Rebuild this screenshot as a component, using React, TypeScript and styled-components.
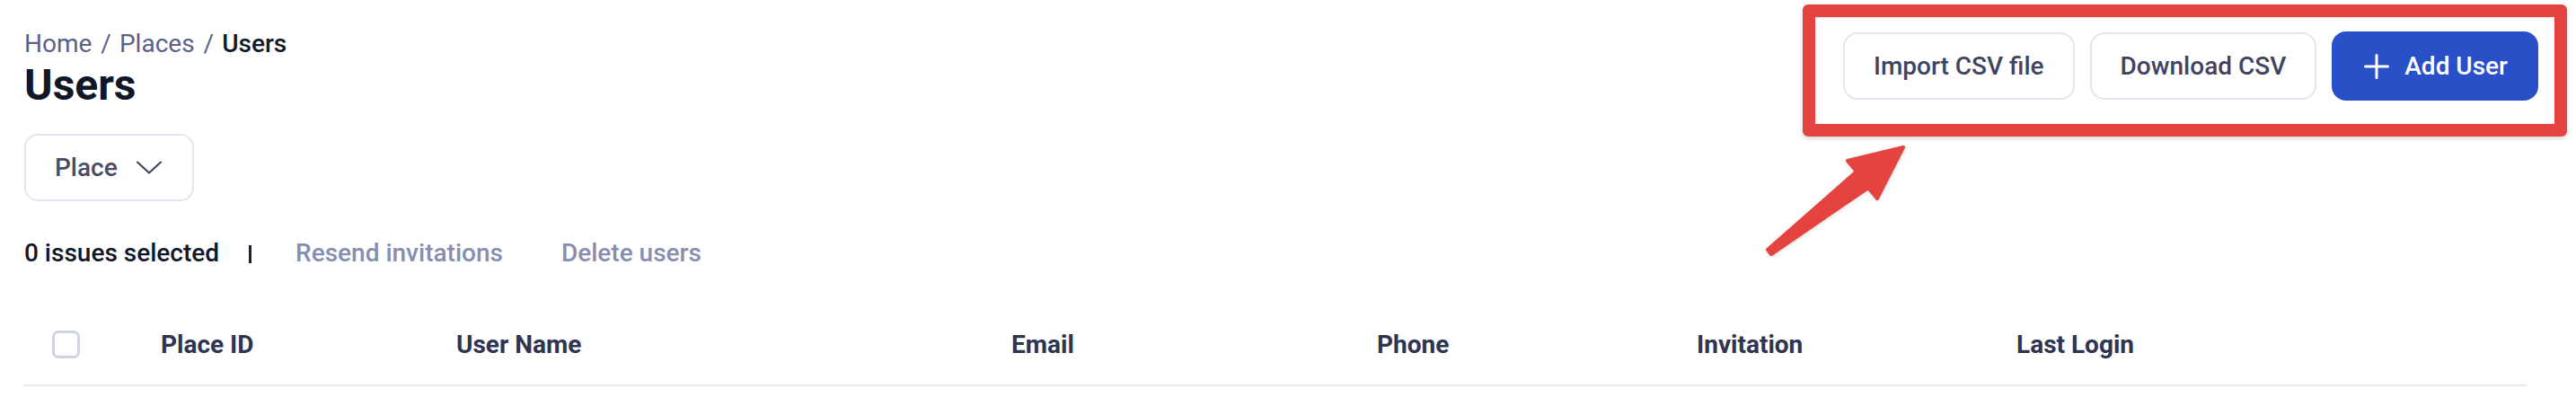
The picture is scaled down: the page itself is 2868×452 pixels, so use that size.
import React from "react";
import styled, { createGlobalStyle } from "styled-components";

const Global = createGlobalStyle`
  html, body { margin: 0; padding: 0; background: #ffffff; }
  body { font-family: Roboto, "Noto Sans", Arial, sans-serif; -webkit-font-smoothing: antialiased; }
  * { box-sizing: border-box; }
`;

const Page = styled.div`
  position: relative;
  width: 2868px;
  height: 452px;
  padding: 32px 55px 0 26px;
  overflow: hidden;
`;

const TopBar = styled.div`
  display: flex;
  justify-content: space-between;
  align-items: flex-start;
  margin-right: -13px;
`;

const TitleBlock = styled.div`
  display: flex;
  flex-direction: column;
  align-items: flex-start;
  padding-left: 1px;
`;

const Breadcrumb = styled.nav`
  font-size: 28px;
  line-height: 33px;
  display: flex;
  white-space: nowrap;
`;

const Crumb = styled.span<{ $current?: boolean }>`
  color: ${(p) => (p.$current ? "#111827" : "#58628a")};
  font-weight: ${(p) => (p.$current ? 500 : 400)};
`;

const Separator = styled.span`
  color: #58628a;
  margin: 0 9px 0 10px;
`;

const Title = styled.h1`
  margin: 2px 0 0;
  font-size: 48px;
  line-height: 56px;
  font-weight: 700;
  color: #111729;
`;

const FilterButton = styled.button`
  margin-top: 26px;
  height: 75px;
  width: 189px;
  display: flex;
  align-items: center;
  padding: 0 0 0 32px;
  gap: 21px;
  border: 2px solid #e3e6ee;
  border-radius: 15px;
  background: #fff;
  font-family: inherit;
  font-size: 28px;
  font-weight: 500;
  color: #474d66;
`;

const Actions = styled.div`
  position: relative;
  display: flex;
  align-items: center;
  gap: 17px;
  margin-top: 3px;
`;

const Button = styled.button<{ $primary?: boolean }>`
  height: ${(p) => (p.$primary ? "77px" : "75px")};
  padding: 0 ${(p) => (p.$primary ? "34px 0 36px" : "32px")};
  display: flex;
  align-items: center;
  gap: 17px;
  border: ${(p) => (p.$primary ? "none" : "2px solid #e3e6ee")};
  border-radius: 16px;
  background: ${(p) => (p.$primary ? "#2a50c8" : "#ffffff")};
  color: ${(p) => (p.$primary ? "#ffffff" : "#3f4560")};
  font-family: inherit;
  font-size: 28px;
  font-weight: 500;
  white-space: nowrap;
`;

const Highlight = styled.div`
  position: absolute;
  left: -45px;
  top: -30px;
  right: -32px;
  bottom: -40px;
  border: 14px solid #e4433f;
  border-radius: 6px;
  box-shadow: 0 2px 5px rgba(0, 0, 0, 0.18), inset 0 1px 3px rgba(0, 0, 0, 0.12);
  pointer-events: none;
`;

const Arrow = styled.svg`
  position: absolute;
  left: 1960px;
  top: 155px;
  overflow: visible;
  filter: drop-shadow(0 1px 2px rgba(0, 0, 0, 0.15));
`;

const SelectionBar = styled.div`
  display: flex;
  align-items: center;
  margin-top: 41px;
  padding-left: 1px;
  font-size: 28px;
  line-height: 33px;
`;

const SelectedCount = styled.span`
  font-weight: 500;
  color: #111729;
`;

const Divider = styled.span`
  width: 3px;
  height: 20px;
  background: #1b2034;
  margin: 2px 49px 0 33px;
`;

const BulkAction = styled.span<{ $gap?: number }>`
  color: #878eaf;
  font-weight: 500;
  margin-left: ${(p) => p.$gap ?? 0}px;
`;

const HeaderRow = styled.div`
  display: grid;
  grid-template-columns: 153px 329px 618px 407px 356px 356px 1fr;
  align-items: center;
  margin-top: 41px;
  padding: 28px 0 28px;
  border-bottom: 2px solid #e3e8ef;
`;

const CheckCell = styled.div`
  padding-left: 32px;
  display: flex;
  align-items: center;
`;

const Checkbox = styled.span`
  width: 31px;
  height: 31px;
  border: 3px solid #cfd4e3;
  border-radius: 7px;
  background: #fff;
`;

const HeaderCell = styled.div`
  font-size: 28px;
  line-height: 33px;
  font-weight: 700;
  color: #2f3450;
  white-space: nowrap;
`;

const Chevron = () => (
  <svg width="28" height="15" viewBox="0 0 28 15" fill="none">
    <path d="M1 1.5 L14 13.5 L27 1.5" stroke="#3a3f55" strokeWidth="2" strokeLinecap="round" strokeLinejoin="round" />
  </svg>
);

const Plus = () => (
  <svg width="28" height="28" viewBox="0 0 28 28" fill="none">
    <path d="M14 1.5 V26.5 M1.5 14 H26.5" stroke="#ffffff" strokeWidth="3" strokeLinecap="round" />
  </svg>
);

const columns = ["Place ID", "User Name", "Email", "Phone", "Invitation", "Last Login"];

export default function App() {
  return (
    <>
      <Global />
      <Page>
        <TopBar>
          <TitleBlock>
            <Breadcrumb>
              <Crumb>Home</Crumb>
              <Separator>/</Separator>
              <Crumb>Places</Crumb>
              <Separator>/</Separator>
              <Crumb $current>Users</Crumb>
            </Breadcrumb>
            <Title>Users</Title>
            <FilterButton>
              Place
              <Chevron />
            </FilterButton>
          </TitleBlock>
          <Actions>
            <Button>Import CSV file</Button>
            <Button>Download CSV</Button>
            <Button $primary>
              <Plus />
              Add User
            </Button>
            <Highlight />
          </Actions>
        </TopBar>
        <SelectionBar>
          <SelectedCount>0 issues selected</SelectedCount>
          <Divider />
          <BulkAction>Resend invitations</BulkAction>
          <BulkAction $gap={65}>Delete users</BulkAction>
        </SelectionBar>
        <HeaderRow>
          <CheckCell>
            <Checkbox />
          </CheckCell>
          {columns.map((c) => (
            <HeaderCell key={c}>{c}</HeaderCell>
          ))}
        </HeaderRow>
        <Arrow width="170" height="135" viewBox="1960 155 170 135">
          <path
            d="M2119 164 L2057 179 L2067 191 L1968 278 L1972 283 L2080 209 L2090 221 Z"
            fill="#e4433f"
            stroke="#e4433f"
            strokeWidth="4"
            strokeLinejoin="round"
          />
        </Arrow>
      </Page>
    </>
  );
}
